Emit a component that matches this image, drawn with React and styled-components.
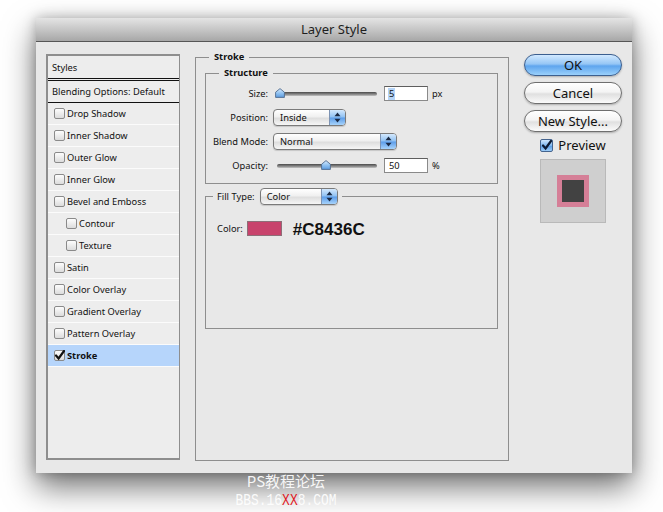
import styled, { createGlobalStyle } from "styled-components";

const GlobalStyle = createGlobalStyle`
  html, body { margin: 0; background: #fff; }
  body { font-family: "Noto Sans", "DejaVu Sans", sans-serif; color: #111; }
  * { box-sizing: border-box; }
`;

const STYLES = [
  { label: "Drop Shadow" },
  { label: "Inner Shadow" },
  { label: "Outer Glow" },
  { label: "Inner Glow" },
  { label: "Bevel and Emboss" },
  { label: "Contour", indent: true },
  { label: "Texture", indent: true },
  { label: "Satin" },
  { label: "Color Overlay" },
  { label: "Gradient Overlay" },
  { label: "Pattern Overlay" },
  { label: "Stroke", checked: true, active: true },
];

function CheckMark({ color = "#111" }) {
  return (
    <svg width="11" height="11" viewBox="0 0 11 11">
      <path d="M2 5.5 L4.6 8.5 L10 1" fill="none" stroke={color} strokeWidth="2.2" strokeLinecap="round" />
    </svg>
  );
}

function Arrows() {
  return (
    <svg width="7" height="11" viewBox="0 0 7 11">
      <path d="M3.5 0.5 L6.5 4.2 H0.5 Z" fill="#1b2a44" />
      <path d="M3.5 10.5 L6.5 6.8 H0.5 Z" fill="#1b2a44" />
    </svg>
  );
}

function Thumb() {
  return (
    <svg width="10" height="10" viewBox="0 0 10 10">
      <defs>
        <linearGradient id="tg" x1="0" y1="0" x2="0" y2="1">
          <stop offset="0" stopColor="#d9ecff" />
          <stop offset="0.55" stopColor="#8ec0f0" />
          <stop offset="1" stopColor="#5d9be0" />
        </linearGradient>
      </defs>
      <path d="M5 0.6 L9.4 4.2 V9.4 H0.6 V4.2 Z" fill="url(#tg)" stroke="#4f6a8c" strokeWidth="0.9" />
    </svg>
  );
}

// value is 0..100; the thumb travels over the track minus its own width
function Slider({ value }) {
  return (
    <SliderBox>
      <Track />
      <ThumbWrap style={{ left: `${(value / 100) * 92}px` }}>
        <Thumb />
      </ThumbWrap>
    </SliderBox>
  );
}

function Select({ width, children }) {
  return (
    <PopupButton $w={width}>
      <span>{children}</span>
      <PopupArrows>
        <Arrows />
      </PopupArrows>
    </PopupButton>
  );
}

export default function App() {
  return (
    <>
      <GlobalStyle />
      <Page>
        <Dialog>
          <TitleBar>Layer Style</TitleBar>
          <DialogBody>
            <StyleList>
              <HeaderRow>Styles</HeaderRow>
              <BlendRow>Blending Options: Default</BlendRow>
              {STYLES.map((s) => (
                <StyleRow key={s.label} $indent={s.indent} $active={s.active}>
                  <CheckBox>{s.checked && <CheckMark />}</CheckBox>
                  {s.label}
                </StyleRow>
              ))}
            </StyleList>

            <StrokeGroup>
              <GroupTitle $offset={4}>Stroke</GroupTitle>
              <StructureGroup>
                <GroupTitle $offset={13}>Structure</GroupTitle>
                <FormGrid>
                  <FieldLabel>Size:</FieldLabel>
                  <FieldControl>
                    <Slider value={0} />
                    <NumberInput $selected>
                      <span>5</span>
                    </NumberInput>
                    <Unit>px</Unit>
                  </FieldControl>

                  <FieldLabel>Position:</FieldLabel>
                  <FieldControl>
                    <Select width={73}>Inside</Select>
                  </FieldControl>

                  <FieldLabel>Blend Mode:</FieldLabel>
                  <FieldControl>
                    <Select width={124}>Normal</Select>
                  </FieldControl>

                  <FieldLabel>Opacity:</FieldLabel>
                  <FieldControl>
                    <Slider value={50} />
                    <NumberInput>
                      <span>50</span>
                    </NumberInput>
                    <Unit>%</Unit>
                  </FieldControl>
                </FormGrid>
              </StructureGroup>

              <FillGroup>
                <FillTitle>
                  Fill Type:
                  <Select width={78}>Color</Select>
                </FillTitle>
                <ColorRow>
                  <FieldLabel as="span">Color:</FieldLabel>
                  <ColorSwatch />
                  <HexText>#C8436C</HexText>
                </ColorRow>
              </FillGroup>
            </StrokeGroup>

            <Actions>
              <PillButton $primary>OK</PillButton>
              <PillButton>Cancel</PillButton>
              <PillButton>New Style...</PillButton>
              <PreviewToggle>
                <BlueCheck>
                  <CheckMark color="#0c1a33" />
                </BlueCheck>
                Preview
              </PreviewToggle>
              <PreviewFrame>
                <PreviewSquare />
              </PreviewFrame>
            </Actions>
          </DialogBody>
        </Dialog>

        <Watermark>
          <div>PS教程论坛</div>
          <WatermarkUrl>
            BBS.16<em>XX</em>8.COM
          </WatermarkUrl>
        </Watermark>
      </Page>
    </>
  );
}

// ====== Styles ======
const Page = styled.div`
  position: relative;
  width: 663px;
  height: 512px;
  overflow: hidden;
  padding: 18px 0 0 36px;
`;

const Dialog = styled.div`
  width: 596px;
  height: 455px;
  background: #e8e8e8;
  display: flex;
  flex-direction: column;
  box-shadow: 0 14px 30px rgba(0, 0, 0, 0.55), 0 0 12px rgba(0, 0, 0, 0.25);
`;

const TitleBar = styled.div`
  height: 24px;
  flex: none;
  border-bottom: 1px solid #565656;
  background: linear-gradient(#e4e4e4, #c6c6c6 50%, #a7a7a7);
  display: flex;
  align-items: center;
  justify-content: center;
  font-size: 13px;
  color: #1e1e1e;
  padding-bottom: 1px;
`;

const DialogBody = styled.div`
  flex: 1;
  display: flex;
  align-items: flex-start;
  padding: 12px 10px 0 10px;
  font-size: 9.3px;
`;

const StyleList = styled.div`
  width: 134px;
  height: 406px;
  flex: none;
  background: #ededed;
  border: 2px solid #8e8e8e;
  border-right-width: 1px;
`;

const HeaderRow = styled.div`
  height: 25px;
  padding-left: 4px;
  display: flex;
  align-items: center;
  border-bottom: 3px double #111;
`;

const BlendRow = styled.div`
  height: 22px;
  padding-left: 4px;
  display: flex;
  align-items: center;
  border-bottom: 1px solid #111;
`;

const StyleRow = styled.div`
  height: 22px;
  display: flex;
  align-items: center;
  gap: 2px;
  padding-left: ${(p) => (p.$indent ? 18 : 6)}px;
  border-bottom: 1px solid #fbfbfb;
  background: ${(p) => (p.$active ? "#b6d5fb" : "transparent")};
  font-weight: ${(p) => (p.$active ? 700 : 400)};
`;

const CheckBox = styled.span`
  width: 11px;
  height: 11px;
  flex: none;
  border: 1px solid #8a8a8a;
  border-radius: 2px;
  background: linear-gradient(#fdfdfd, #dcdcdc);
  display: flex;
  align-items: center;
  justify-content: center;
  svg { flex: none; }
`;

const StrokeGroup = styled.fieldset`
  width: 314px;
  height: 410px;
  flex: none;
  margin: -3px 0 0 15px;
  padding: 0 10px 0 9px;
  border: 1px solid #8e8e8e;
  min-width: 0;
`;

const GroupTitle = styled.legend`
  margin-left: ${(p) => p.$offset}px;
  padding: 0 5px;
  font-weight: 700;
  line-height: 12px;
`;

const StructureGroup = styled.fieldset`
  margin: 4px 0 0 0;
  padding: 6px 0 9px 0;
  border: 1px solid #8e8e8e;
  min-width: 0;
`;

const FormGrid = styled.div`
  display: grid;
  grid-template-columns: 62px 1fr;
  grid-template-rows: 17px 17px 17px 17px;
  column-gap: 5px;
  row-gap: 7px;
  align-items: center;
`;

const FieldLabel = styled.div`
  text-align: right;
  white-space: nowrap;
`;

const FieldControl = styled.div`
  height: 17px;
  display: flex;
  align-items: center;
`;

const SliderBox = styled.div`
  position: relative;
  width: 102px;
  height: 17px;
  margin-left: 2px;
`;

const Track = styled.div`
  position: absolute;
  left: 2px;
  right: 0;
  top: 7px;
  height: 4px;
  border-radius: 2px;
  background: linear-gradient(#4a4a4a, #8c8c8c 60%, #c4c4c4);
`;

const ThumbWrap = styled.div`
  position: absolute;
  top: 3px;
  line-height: 0;
`;

const NumberInput = styled.div`
  width: 44px;
  height: 15px;
  margin-left: 7px;
  background: #fff;
  border: 1px solid #8a8a8a;
  border-top-color: #5e5e5e;
  padding-left: 3px;
  display: flex;
  align-items: center;
  span {
    background: ${(p) => (p.$selected ? "#b5d4f7" : "transparent")};
    padding: 0 1px;
    line-height: 12px;
  }
`;

const Unit = styled.span`
  margin-left: 4px;
`;

const PopupButton = styled.div`
  width: ${(p) => p.$w}px;
  height: 17px;
  border: 1px solid #7a7a7a;
  border-radius: 4px;
  background: linear-gradient(#ffffff, #f0f0f0 45%, #dedede 55%, #f6f6f6);
  display: flex;
  align-items: center;
  padding-left: 6px;
  overflow: hidden;
  font-weight: 400;
  box-shadow: 0 1px 1px rgba(0, 0, 0, 0.15);
`;

const PopupArrows = styled.span`
  margin-left: auto;
  width: 16px;
  height: 100%;
  border-left: 1px solid #7d93b3;
  background: linear-gradient(#d3e8fd, #8fc1f3 48%, #5b9ce9 52%, #a7d3fb);
  display: flex;
  align-items: center;
  justify-content: center;
`;

const FillGroup = styled.fieldset`
  margin: 4px 0 0 0;
  padding: 11px 0 0 11px;
  height: 141px;
  border: 1px solid #8e8e8e;
  min-width: 0;
`;

const FillTitle = styled.legend`
  margin-left: -4px;
  padding: 0 4px;
  display: flex;
  align-items: center;
  gap: 5px;
  font-weight: 400;
`;

const ColorRow = styled.div`
  display: flex;
  align-items: center;
`;

const ColorSwatch = styled.span`
  width: 35px;
  height: 15px;
  margin: 0 11px 0 4px;
  background: #c8436c;
  border: 1px solid #8d6f78;
`;

const HexText = styled.span`
  font-family: "Liberation Sans", Arial, sans-serif;
  font-weight: 700;
  font-size: 17px;
  margin-top: 4px;
`;

const Actions = styled.div`
  width: 98px;
  flex: none;
  margin-left: 15px;
  display: flex;
  flex-direction: column;
  align-items: center;
  gap: 6px;
`;

const PillButton = styled.div`
  width: 98px;
  height: 22px;
  border-radius: 11px;
  display: flex;
  align-items: center;
  justify-content: center;
  font-size: 13px;
  color: #111;
  border: 1px solid ${(p) => (p.$primary ? "#3c5f8f" : "#6f6f6f")};
  background: ${(p) =>
    p.$primary
      ? "linear-gradient(#d2e9ff, #95c6f5 45%, #5ea5ee 55%, #9ad0fb)"
      : "linear-gradient(#ffffff, #f4f4f4 45%, #e0e0e0 55%, #fbfbfb)"};
  box-shadow: 0 1px 2px rgba(0, 0, 0, 0.25);
`;

const PreviewToggle = styled.div`
  display: flex;
  align-items: center;
  gap: 5px;
  font-size: 13px;
  line-height: 14px;
`;

const BlueCheck = styled.span`
  width: 13px;
  height: 13px;
  border: 1px solid #45648e;
  border-radius: 2px;
  background: linear-gradient(#cfe6fd, #7fb7ef 50%, #5d9ee6 55%, #9dcdf9);
  display: flex;
  align-items: center;
  justify-content: center;
`;

const PreviewFrame = styled.div`
  width: 66px;
  height: 64px;
  margin-top: 1px;
  background: #cfcfcf;
  border: 1px solid #b9b9b9;
  display: flex;
  align-items: center;
  justify-content: center;
`;

const PreviewSquare = styled.div`
  width: 32px;
  height: 32px;
  background: #424242;
  border: 5px solid #d57f97;
`;

const Watermark = styled.div`
  position: absolute;
  left: 286px;
  top: 472px;
  transform: translateX(-50%);
  color: rgba(255, 255, 255, 0.92);
  text-align: center;
  font-family: "Noto Sans CJK SC", sans-serif;
  font-size: 15px;
  line-height: 17px;
  white-space: nowrap;
`;

const WatermarkUrl = styled.div`
  font-family: "Liberation Mono", monospace;
  font-size: 17px;
  line-height: 18px;
  margin-top: 3px;
  transform: scaleX(0.76);
  em {
    font-style: normal;
    color: #e0191f;
  }
`;
